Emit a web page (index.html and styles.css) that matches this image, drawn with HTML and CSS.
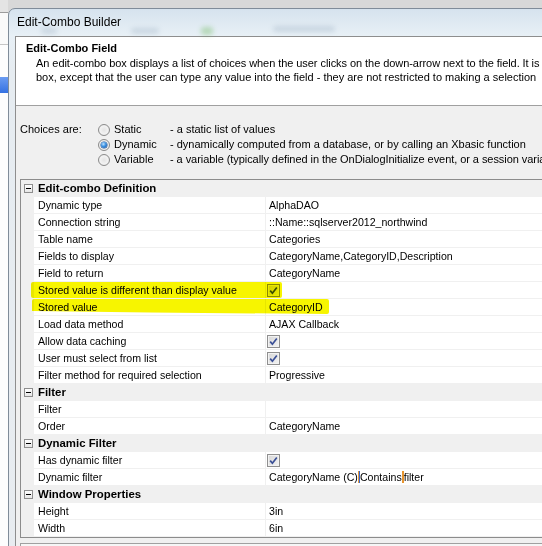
FILE: index.html
```html
<!DOCTYPE html>
<html>
<head>
<meta charset="utf-8">
<title>Edit-Combo Builder</title>
<link rel="stylesheet" href="styles.css">
</head>
<body>
<div class="desktop">
  <div class="bgapp">
    <div class="bg-top"></div>
    <div class="bg-band"></div>
    <div class="bg-list"><div class="bg-sel"></div></div>
  </div>

  <div class="window">
    <div class="titlebar">
      <span class="title">Edit-Combo Builder</span>
      <span class="blur b1"></span>
      <span class="blur b2"></span>
      <span class="blur b3"></span>
      <span class="blur b4"></span>
    </div>

    <div class="content">
      <div class="header">
        <div class="h-title">Edit-Combo Field</div>
        <div class="h-desc">
          <div class="line tight">An edit-combo box displays a list of choices when the user clicks on the down-arrow next to the field. It is</div>
          <div class="line">box, except that the user can type any value into the field - they are not restricted to making a selection</div>
        </div>
      </div>

      <div class="choices">
        <div class="choices-label">Choices are:</div>
        <div class="choices-list">
          <div class="choice"><span class="radio"></span><span class="c-name">Static</span><span class="c-desc">- a static list of values</span></div>
          <div class="choice"><span class="radio checked"></span><span class="c-name">Dynamic</span><span class="c-desc">- dynamically computed from a database, or by calling an Xbasic function</span></div>
          <div class="choice"><span class="radio"></span><span class="c-name">Variable</span><span class="c-desc tight">- a variable (typically defined in the OnDialogInitialize event, or a session varia</span></div>
        </div>
      </div>

      <div class="grid">
        <div class="row cat"><span class="margin"><span class="minus"></span></span><span class="cname">Edit-combo Definition</span></div>
        <div class="row"><span class="margin"></span><span class="pname">Dynamic type</span><span class="pval">AlphaDAO</span></div>
        <div class="row"><span class="margin"></span><span class="pname">Connection string</span><span class="pval">::Name::sqlserver2012_northwind</span></div>
        <div class="row"><span class="margin"></span><span class="pname">Table name</span><span class="pval">Categories</span></div>
        <div class="row"><span class="margin"></span><span class="pname">Fields to display</span><span class="pval">CategoryName,CategoryID,Description</span></div>
        <div class="row"><span class="margin"></span><span class="pname">Field to return</span><span class="pval">CategoryName</span></div>
        <div class="row"><span class="margin"></span><span class="pname">Stored value is different than display value</span><span class="pval"><span class="check"><svg width="9" height="9" viewBox="0 0 9 9"><path d="M1.2 4.6 L3.4 7.2 L7.8 1.4" fill="none" stroke="#3a4f96" stroke-width="1.7"/></svg></span></span></div>
        <div class="row"><span class="margin"></span><span class="pname">Stored value</span><span class="pval">CategoryID</span></div>
        <div class="row"><span class="margin"></span><span class="pname">Load data method</span><span class="pval">AJAX Callback</span></div>
        <div class="row"><span class="margin"></span><span class="pname">Allow data caching</span><span class="pval"><span class="check"><svg width="9" height="9" viewBox="0 0 9 9"><path d="M1.2 4.6 L3.4 7.2 L7.8 1.4" fill="none" stroke="#3a4f96" stroke-width="1.7"/></svg></span></span></div>
        <div class="row"><span class="margin"></span><span class="pname">User must select from list</span><span class="pval"><span class="check"><svg width="9" height="9" viewBox="0 0 9 9"><path d="M1.2 4.6 L3.4 7.2 L7.8 1.4" fill="none" stroke="#3a4f96" stroke-width="1.7"/></svg></span></span></div>
        <div class="row"><span class="margin"></span><span class="pname">Filter method for required selection</span><span class="pval">Progressive</span></div>
        <div class="row cat"><span class="margin"><span class="minus"></span></span><span class="cname">Filter</span></div>
        <div class="row"><span class="margin"></span><span class="pname">Filter</span><span class="pval"></span></div>
        <div class="row"><span class="margin"></span><span class="pname">Order</span><span class="pval">CategoryName</span></div>
        <div class="row cat"><span class="margin"><span class="minus"></span></span><span class="cname">Dynamic Filter</span></div>
        <div class="row"><span class="margin"></span><span class="pname">Has dynamic filter</span><span class="pval"><span class="check"><svg width="9" height="9" viewBox="0 0 9 9"><path d="M1.2 4.6 L3.4 7.2 L7.8 1.4" fill="none" stroke="#3a4f96" stroke-width="1.7"/></svg></span></span></div>
        <div class="row"><span class="margin"></span><span class="pname">Dynamic filter</span><span class="pval">CategoryName (C)<span class="sep sep-a"></span>Contains<span class="sep sep-b"></span>filter</span></div>
        <div class="row cat"><span class="margin"><span class="minus"></span></span><span class="cname">Window Properties</span></div>
        <div class="row"><span class="margin"></span><span class="pname">Height</span><span class="pval">3in</span></div>
        <div class="row"><span class="margin"></span><span class="pname">Width</span><span class="pval">6in</span></div>

        <span class="marker mk1"></span>
        <span class="marker mk2"></span>
      </div>

      <div class="nextbox"></div>
    </div>
  </div>
</div>
</body>
</html>
```

FILE: styles.css
```css
* { box-sizing: border-box; }
html, body { margin: 0; padding: 0; }
body {
  width: 542px;
  height: 546px;
  overflow: hidden;
  background: #d8d8d8;
  font-family: "Liberation Sans", Arial, sans-serif;
  font-size: 11px;
  color: #000;
}
.desktop {
  position: relative;
  width: 542px;
  height: 546px;
  overflow: hidden;
}

/* background application peeking at the left */
.bgapp {
  width: 8px;
  height: 546px;
  display: flex;
  flex-direction: column;
  background: #fbfbfb;
}
.bg-top { height: 13px; background: #e4e4e4; border-bottom: 1px solid #9c9c9c; }
.bg-band { height: 32px; background: #fafafa; border-bottom: 1px solid #c6c6c6; }
.bg-list { flex: 1; padding-top: 32px; background: #fdfdfd; }
.bg-sel { height: 16px; background: linear-gradient(#6b9cf2, #3471e2); }

/* dialog window */
.window {
  position: absolute;
  left: 8px;
  top: 8px;
  width: 600px;
  height: 600px;
  border: 1px solid #808c99;
  border-radius: 7px 0 0 0;
  background: linear-gradient(180deg, #d6e3ee 0px, #e8f0f6 27px, #e6ecf1 60px, #e8ecf0 100%);
  padding: 0 0 0 6px;
  display: flex;
  flex-direction: column;
}
.titlebar {
  position: relative;
  height: 27px;
  padding-left: 2px;
  line-height: 27px;
  font-size: 12px;
  color: #000;
  white-space: nowrap;
}
.title { position: relative; z-index: 1; }
.blur {
  position: absolute;
  height: 6px;
  border-radius: 3px;
  filter: blur(2.5px);
  opacity: 0.3;
  background: #8ea3b8;
}
.b1 { left: 26px; top: 19px; width: 16px; }
.b2 { left: 116px; top: 19px; width: 28px; }
.b3 { left: 186px; top: 18px; width: 12px; height: 8px; background: #6fb85e; opacity: 0.4; }
.b4 { left: 258px; top: 17px; width: 62px; }

.content {
  flex: 1;
  border-left: 1px solid #8e8e8e;
  border-top: 1px solid #8e8e8e;
  background: #f0f0f0;
  display: flex;
  flex-direction: column;
  overflow: hidden;
}

.header {
  height: 69px;
  flex: none;
  background: #fff;
  border-bottom: 1px solid #a0a0a0;
  padding: 4px 0 0 10px;
  white-space: nowrap;
}
.h-title {
  font-weight: bold;
  line-height: 14px;
}
.h-desc {
  margin-top: 1px;
  padding-left: 10px;
  line-height: 14px;
}
.tight { letter-spacing: -0.06px; }

.choices {
  display: flex;
  padding: 16px 0 0 4px;
  line-height: 15px;
  white-space: nowrap;
}
.choices-label { width: 78px; flex: none; }
.choice {
  display: flex;
  align-items: center;
  height: 15px;
}
.radio {
  flex: none;
  width: 12px;
  height: 12px;
  border-radius: 50%;
  border: 1px solid #8b8b8b;
  background: radial-gradient(circle at 50% 50%, #e4e4e4 0, #f2f2f2 55%, #dedede 100%);
  margin-right: 4px;
  display: flex;
  align-items: center;
  justify-content: center;
}
.radio.checked::after {
  content: "";
  width: 6px;
  height: 6px;
  border-radius: 50%;
  background: radial-gradient(circle at 40% 35%, #bfe3ff 0, #3a8fe0 45%, #1a4f9c 100%);
  box-shadow: 0 0 0 0.5px #24508e;
}
.c-name { width: 56px; flex: none; }

/* property grid */
.grid {
  position: relative;
  flex: none;
  margin: 12px 0 0 4px;
  border-top: 1px solid #8c8c8c;
  border-left: 1px solid #8c8c8c;
  border-bottom: 1px solid #8c8c8c;
  background: #fff;
  font-size: 10.6px;
}
.row {
  display: grid;
  grid-template-columns: 13px 231px 1fr;
  height: 17px;
  white-space: nowrap;
}
.margin {
  background: #f0f0f0;
  display: flex;
  align-items: center;
  padding: 0 0 1px 3px;
}
.minus {
  width: 9px;
  height: 9px;
  border: 1px solid #8e8e8e;
  background: linear-gradient(#ffffff, #e6e6e6);
  display: flex;
  align-items: center;
  justify-content: center;
}
.minus::before {
  content: "";
  width: 5px;
  height: 1px;
  background: #000;
}
.pname {
  padding-left: 4px;
  line-height: 16px;
  border-bottom: 1px solid #f0f0f0;
  overflow: hidden;
}
.pval {
  display: flex;
  align-items: center;
  padding-left: 3px;
  line-height: 16px;
  border-left: 1px solid #f0f0f0;
  border-bottom: 1px solid #f0f0f0;
}
.cat { background: #f0f0f0; }
.cname {
  grid-column: 2 / 4;
  padding-left: 4px;
  line-height: 16px;
  font-weight: bold;
  font-size: 11.4px;
}
.check {
  width: 13px;
  height: 13px;
  margin-left: -2px;
  border: 1px solid #8f8f8f;
  background: linear-gradient(135deg, #d6d6d6, #f4f4f4);
  box-shadow: inset 0 0 0 1px #f2f2f2;
  display: flex;
  align-items: center;
  justify-content: center;
}
.sep {
  display: inline-block;
  width: 2px;
  height: 12px;
}
.sep-a { background: linear-gradient(90deg, #e39a3c 50%, #3a67cf 50%); }
.sep-b { background: #e8952e; }

/* yellow highlighter strokes */
.marker {
  position: absolute;
  background: #f7f500;
  mix-blend-mode: multiply;
  border-radius: 2px;
}
.mk1 { left: 10px; top: 102px; width: 251px; height: 16px; }
.mk2 {
  left: 11px;
  top: 119px;
  width: 297px;
  height: 15px;
  clip-path: polygon(0 0, 100% 0, 100% 100%, 40% 90%, 0 80%);
}

.nextbox {
  flex: 1;
  margin: 5px 0 0 4px;
  border-top: 1px solid #a0a0a0;
  border-left: 1px solid #a0a0a0;
  background: #f6f6f6;
}
```
